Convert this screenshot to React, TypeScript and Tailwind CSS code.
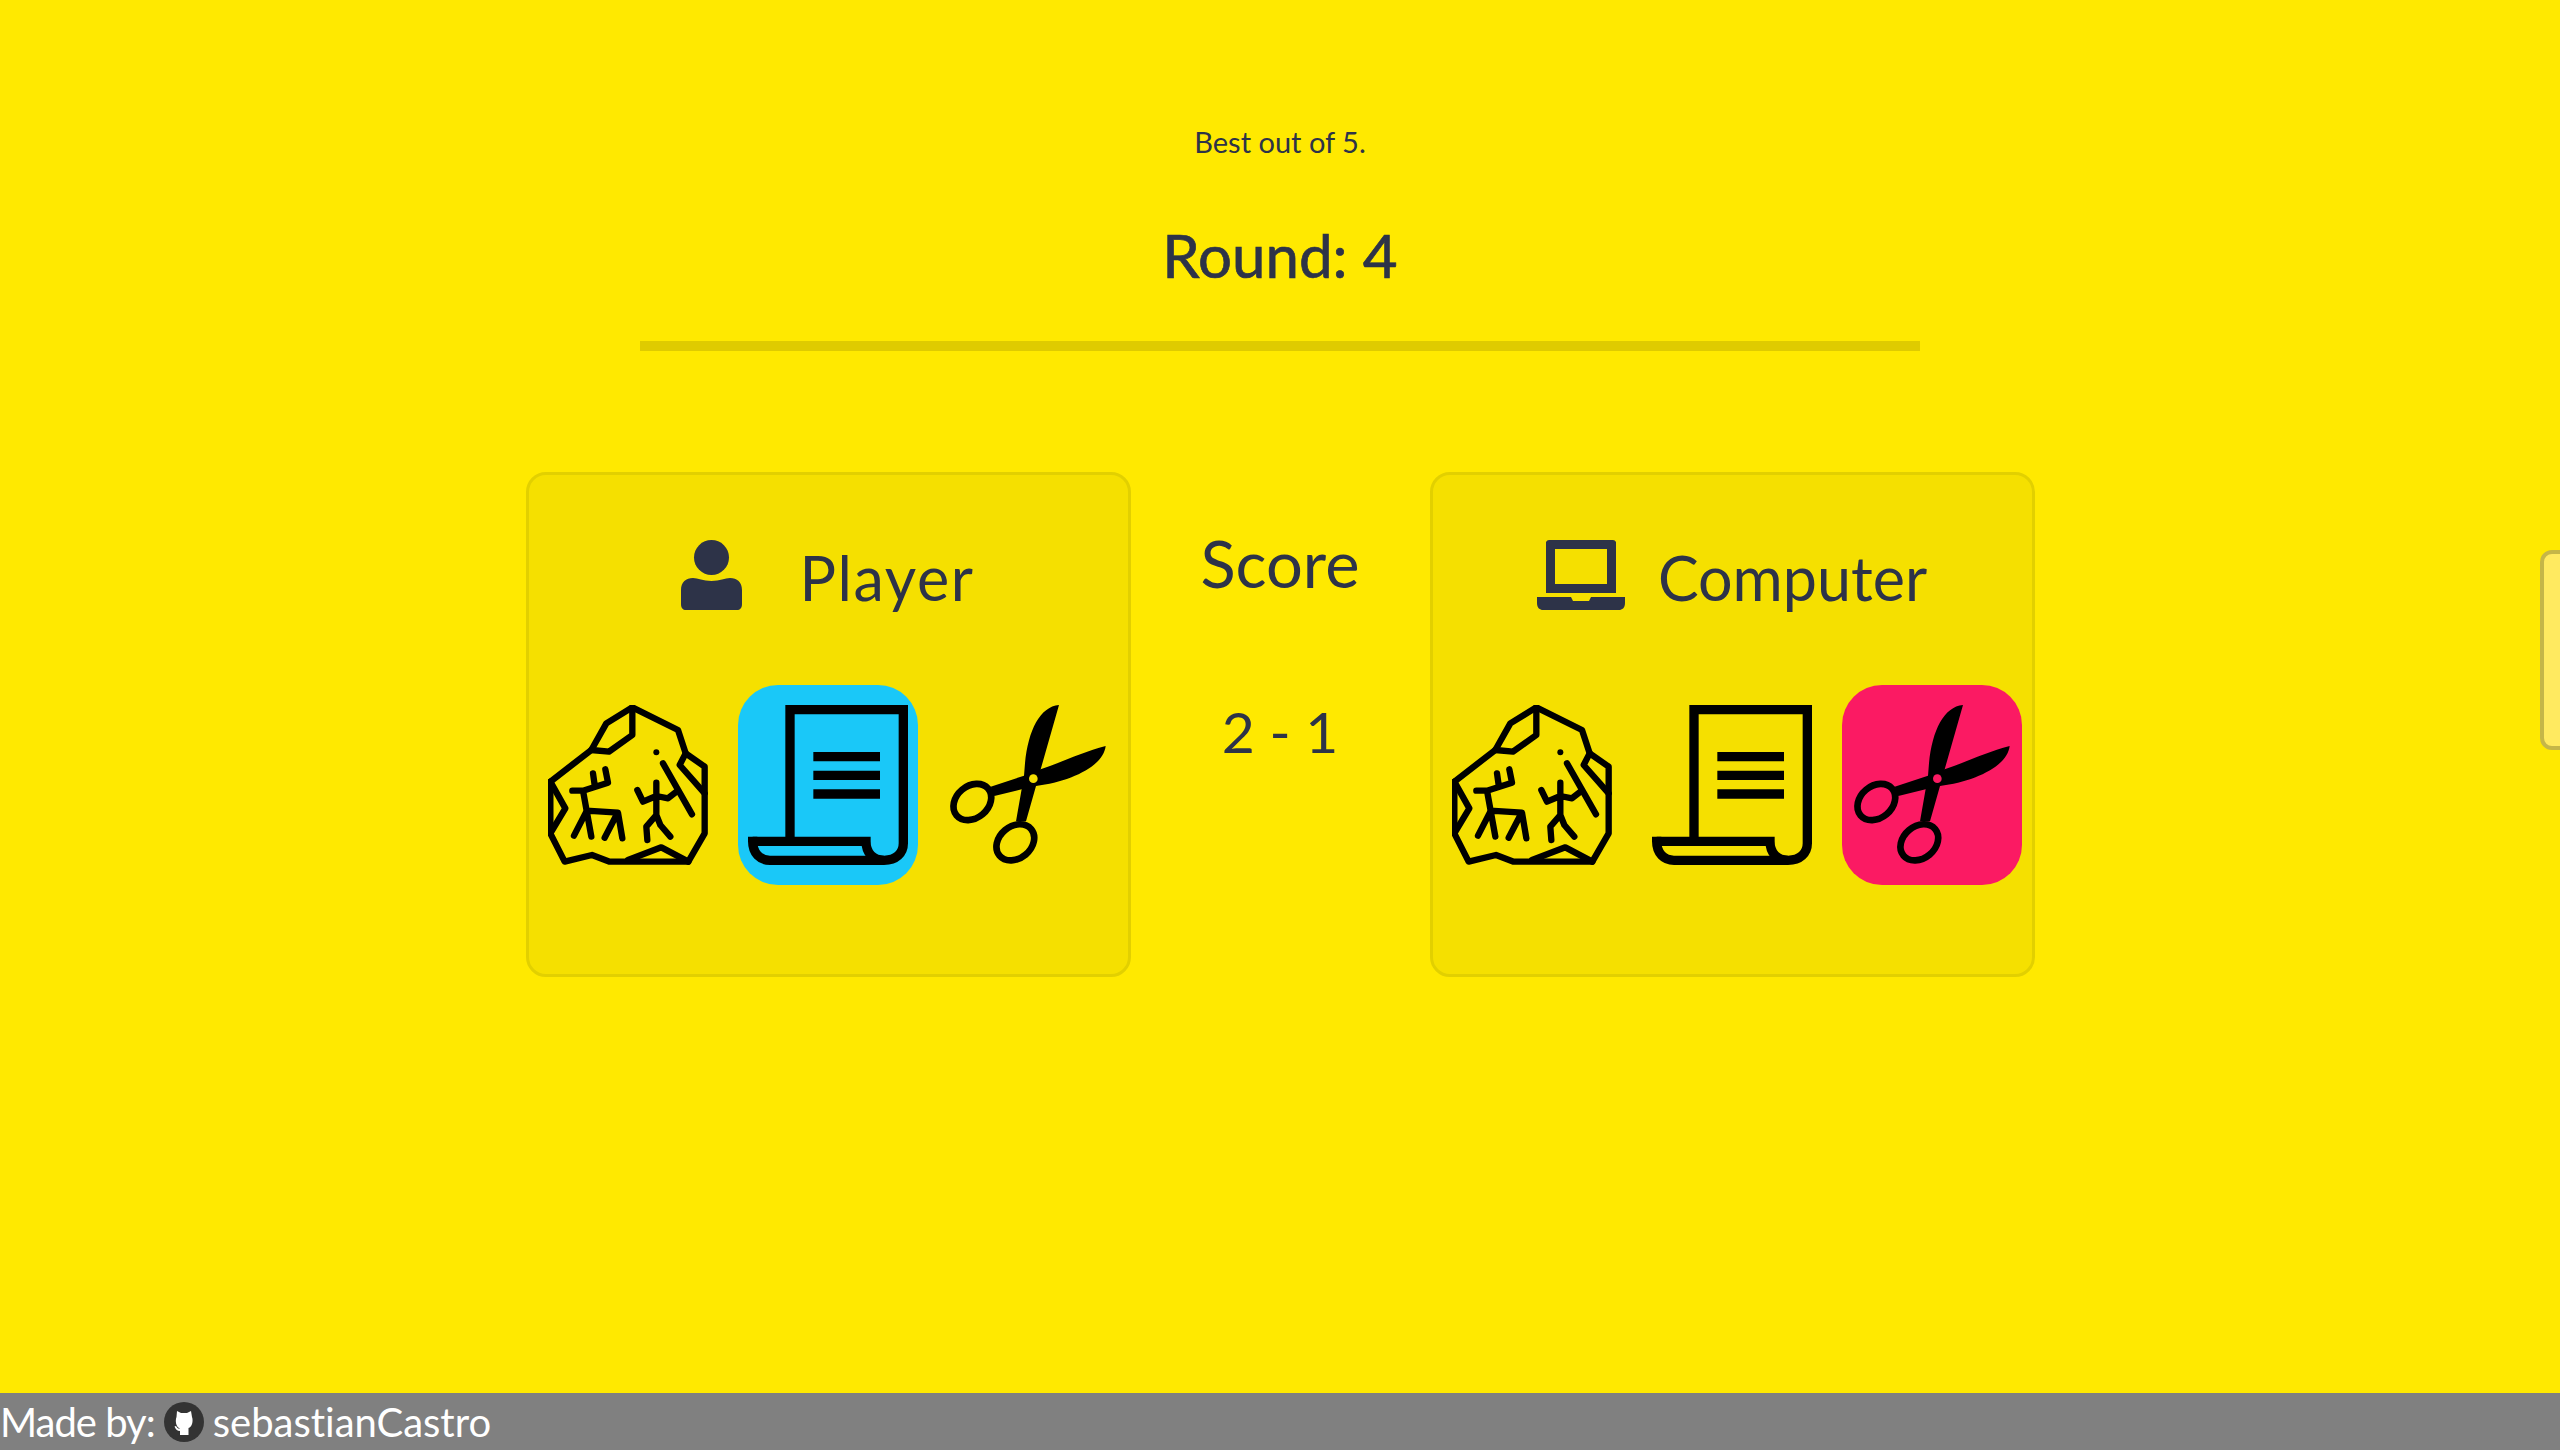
function RockIcon() {
  return (
    <svg viewBox="55 45 480 480" className="block h-[160px] w-[160px]" fill="none" stroke="#000" strokeWidth="19" strokeLinecap="round" strokeLinejoin="round">
      <path d="M62 275 L185 180 L230 100 L308 52 L445 120 L468 190 L525 230 L525 430 L476 515 L240 515 L187 495 L105 515 L62 430 Z" />
      <path d="M308 52 L308 135 L238 185 L185 180" />
      <path d="M468 190 L450 225 L525 310" />
      <path d="M62 275 L107 355 L62 430" />
      <path d="M295 510 L395 472 L476 515" />
      <path d="M128 302 L160 302 L235 278 L227 238 M190 250 L195 285 M160 302 L185 440 M170 362 L265 368 L278 445 M170 365 L133 437 M262 372 L225 443" />
      <path d="M380 278 L380 375 L350 410 L353 450 M380 375 L392 405 L422 440 M323 300 L340 335 L380 318 L415 325 L440 305" />
      <path d="M400 220 L487 373" />
      <circle cx="380" cy="187" r="9" fill="#000" stroke="none" />
    </svg>
  );
}

function PaperIcon() {
  return (
    <svg viewBox="54 75 480 480" className="block h-[160px] w-[160px]" fill="none" stroke="#000" strokeWidth="28">
      <path d="M68 484 H408 C408 520 430 541 462 541 C498 541 520 520 520 490 V89 H180 V484" />
      <path d="M68 470 V484 C68 520 90 541 120 541 H462" />
      <path d="M250 230 H450 M250 286 H450 M250 342 H450" />
    </svg>
  );
}

function ScissorsIcon({ hole }: { hole: string }) {
  return (
    <svg viewBox="654 75 480 480" className="block h-[160px] w-[160px]">
      <path d="M1127 198 C1120 260 1020 305 918 318 L875 328 L793 348 L782 320 L882 287 L932 268 C1000 245 1060 215 1127 198 Z" />
      <path d="M987 75 C930 80 895 150 885 250 L882 287 L858 424 L888 424 L918 318 L932 268 Z" />
      <g fill="none" stroke="#000" strokeWidth="20">
        <ellipse cx="727" cy="366" rx="62" ry="48" transform="rotate(-40 727 366)" />
        <ellipse cx="856" cy="487" rx="62" ry="48" transform="rotate(-40 856 487)" />
      </g>
      <circle cx="910" cy="296" r="13" className={hole} />
    </svg>
  );
}

function PersonIcon() {
  return (
    <svg viewBox="0 0 61 70" className="block h-[70px] w-[61px]" fill="#2d3348">
      <ellipse cx="30.5" cy="17.5" rx="17.5" ry="17.5" />
      <path d="M0 58 V50 C0 42 5 38 12 38 C17 38 22 41 30.5 41 C39 41 44 38 49 38 C56 38 61 42 61 50 V64 C61 68 59 70 56 70 H5 C2 70 0 68 0 64 Z" />
    </svg>
  );
}

function LaptopIcon() {
  return (
    <svg viewBox="0 0 88 70" className="block h-[70px] w-[88px]" fill="#2d3348">
      <path fillRule="evenodd" d="M12 0 H76 Q78 0 79 2 V53 H9 V2 Q10 0 12 0 Z M18 9 V44 H70 V9 Z" />
      <path d="M0 57 H34 L36 61 H52 L54 57 H88 V63 C88 68 85 70 82 70 H6 C3 70 0 68 0 63 Z" />
    </svg>
  );
}

function GithubBadge() {
  return (
    <svg viewBox="0 0 40 40" className="mx-[9px] block h-[40px] w-[40px] shrink-0">
      <circle cx="20" cy="20" r="20" fill="#333" />
      <path fill="#fff" d="M13 9 L17 11 H23 L27 9 L28 15 C29.500 19 28 25 24.500 26 V33 H16 V29 C13 29 11.500 27 10.500 24.500 L12 24 C13 26 14.500 27 16 26.500 C12 25 11 19 12.500 15 Z" />
    </svg>
  );
}

function Choice({ active, children }: { active?: string; children: React.ReactNode }) {
  return <div className={`flex h-[200px] w-[180px] items-center justify-center rounded-[40px] ${active ?? ""}`}>{children}</div>;
}

export default function App() {
  return (
    <div className="relative flex min-h-[1450px] flex-col overflow-hidden bg-[#ffe900] font-['Lato',sans-serif] text-[#2d3348] [font-variant-ligatures:none]">
      <main className="flex-1">
        <p className="pt-[124px] text-center text-[29px] leading-[36px]">Best out of 5.</p>
        <h1 className="mt-[59px] text-center text-[60px] leading-[72px] [-webkit-text-stroke:0.7px_#2d3348]">Round: 4</h1>
        <hr className="mx-auto mt-[50px] h-[10px] w-[1280px] border-0 bg-[#dfcb00]" />

        <div className="mt-[121px] flex justify-center">
          <section className="h-[505px] w-[605px] rounded-[20px] border-[3px] border-[#e2d000] bg-[#f5e000]">
            <div className="flex items-center justify-center gap-[57px] pt-[65px] text-[61px] leading-[70px]">
              <PersonIcon />
              <span className="relative top-[3px] tracking-[1.6px]">Player</span>
            </div>
            <div className="mt-[75px] flex justify-center gap-[20px]">
              <Choice><RockIcon /></Choice>
              <Choice active="bg-[#1ac8f8]"><PaperIcon /></Choice>
              <Choice><ScissorsIcon hole="fill-[#f5e000]" /></Choice>
            </div>
          </section>

          <div className="w-[299px] pt-[56px] text-center leading-[70px]">
            <div className="text-[65px]">Score</div>
            <div className="mt-[98px] text-[57px]">2 - 1</div>
          </div>

          <section className="h-[505px] w-[605px] rounded-[20px] border-[3px] border-[#e2d000] bg-[#f5e000]">
            <div className="flex items-center justify-center gap-[33px] pt-[65px] text-[61px] leading-[70px]">
              <LaptopIcon />
              <span className="relative top-[3px]">Computer</span>
            </div>
            <div className="mt-[75px] flex justify-center gap-[20px]">
              <Choice><RockIcon /></Choice>
              <Choice><PaperIcon /></Choice>
              <Choice active="bg-[#fb1a63]"><ScissorsIcon hole="fill-[#fb1a63]" /></Choice>
            </div>
          </section>
        </div>
      </main>

      {/* tab poking in from the right edge */}
      <div className="absolute left-[2540px] top-[550px] h-[200px] w-[60px] rounded-[12px] border-4 border-[#c5b648] bg-[#ffea60]" />

      <footer className="flex h-[57px] items-center bg-[#808080] text-[40px] text-white">
        <span className="tracking-[-1px]">Made by:</span>
        <GithubBadge />
        <span>sebastianCastro</span>
      </footer>
    </div>
  );
}
